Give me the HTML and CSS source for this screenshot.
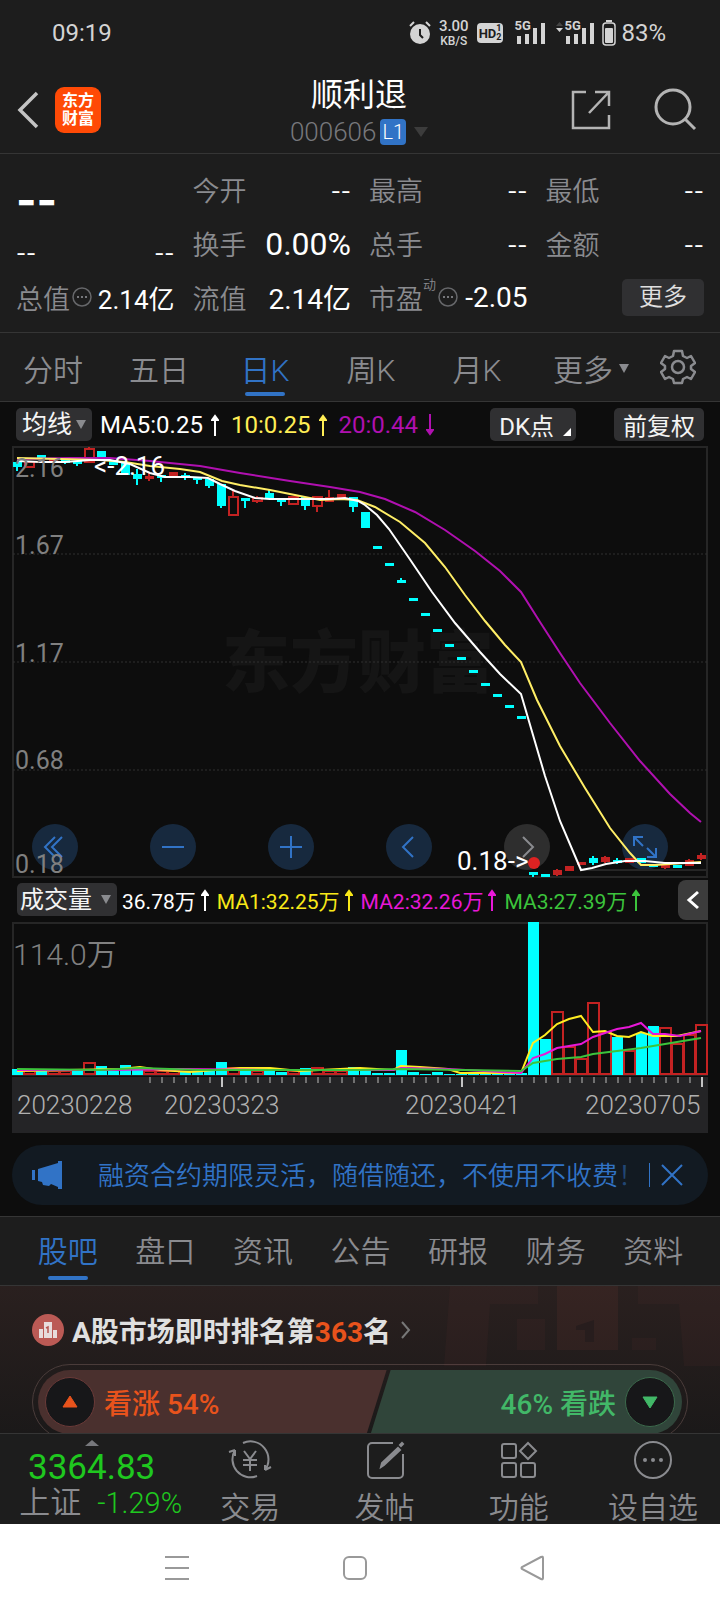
FILE: index.html
```html
<!DOCTYPE html>
<html lang="zh-CN">
<head>
    <meta charset="UTF-8">
    <meta name="viewport" content="width=device-width,initial-scale=1.0">
    <title>顺利退 000606</title>
    <link rel="stylesheet" href="styles.css">
</head>
<body>
<div class="page">
    <div class="status">
        <span class="clock">09:19</span>
        <div class="status-icons">
            <svg width="22" height="24" viewBox="0 0 22 24"><circle cx="11" cy="13" r="10" fill="#d4d4d4"/><path d="M1 5l4-4M21 5l-4-4" stroke="#d4d4d4" stroke-width="2"/><path d="M11 8v6l3 3" stroke="#1d1d1d" stroke-width="2" fill="none"/></svg>
            <span class="speed">3.00<small>KB/S</small></span>
            <span class="hd">HD<small>1<br>2</small></span>
            <span class="signal"><b>5G</b>
                <svg width="31" height="22" viewBox="0 0 31 22" fill="#d4d4d4"><path d="M3 14h4v8H3zM11 12h4v10h-4zM19 6h4v16h-4zM27 1h4v21h-4z"/></svg>
            </span>
            <span class="signal second"><b>5G</b>
                <svg width="38" height="22" viewBox="0 0 38 22" fill="#d4d4d4"><path d="M0 6h7l-3.500 4z"/><path d="M0 4h7L3.500 0z" fill="#444"/><path d="M10 14h4v8h-4zM18 12h4v10h-4zM26 6h4v16h-4zM34 1h4v21h-4z"/></svg>
            </span>
            <svg width="14" height="26" viewBox="0 0 14 26"><rect x="1" y="3" width="12" height="22" rx="3" fill="none" stroke="#d4d4d4" stroke-width="1.500"/><path d="M4 1h6" stroke="#d4d4d4" stroke-width="2"/><rect x="3" y="8" width="8" height="15" rx="1" fill="#d4d4d4"/></svg>
            <span class="battery">83%</span>
        </div>
    </div>

    <header class="header">
        <div class="header-left">
            <button class="icon-btn" aria-label="返回"><svg width="22" height="38" viewBox="0 0 22 38"><path d="M20 2L3 19l17 17" fill="none" stroke="#c4c4c4" stroke-width="3.500"/></svg></button>
            <span class="logo">东方<br>财富</span>
        </div>
        <div class="title">
            <h1>顺利退</h1>
            <p>000606<span class="level">L1</span><i class="down"></i></p>
        </div>
        <div class="header-right">
            <button class="icon-btn" aria-label="分享"><svg width="40" height="40" viewBox="0 0 40 40" fill="none" stroke="#b4b4b4" stroke-width="2.500"><path d="M15 2H2v36h36V25M24 2h14v14M38 2L18 23"/></svg></button>
            <button class="icon-btn" aria-label="搜索"><svg width="43" height="43" viewBox="0 0 43 43" fill="none" stroke="#b4b4b4" stroke-width="3"><circle cx="19" cy="19" r="17"/><path d="M31 31l10 10"/></svg></button>
        </div>
    </header>

    <section class="quote">
        <div class="cell"><strong class="price">--</strong></div>
        <div class="cell"><span>今开</span><b class="none">--</b></div>
        <div class="cell"><span>最高</span><b class="none">--</b></div>
        <div class="cell"><span>最低</span><b class="none">--</b></div>
        <div class="cell low"><b class="none">--</b><b class="none">--</b></div>
        <div class="cell"><span>换手</span><b class="big">0.00%</b></div>
        <div class="cell"><span>总手</span><b class="none">--</b></div>
        <div class="cell"><span>金额</span><b class="none">--</b></div>
        <div class="cell"><span>总值<svg class="info" width="20" height="20" viewBox="0 0 20 20"><circle cx="10" cy="10" r="9" fill="none" stroke="#66676a" stroke-width="1.500"/><path d="M5 9h2v2H5zM9 9h2v2H9zM13 9h2v2h-2z" fill="#77787c"/></svg></span><b class="small">2.14亿</b></div>
        <div class="cell"><span>流值</span><b>2.14亿</b></div>
        <div class="cell"><span>市盈<sup>动</sup><svg class="info" width="20" height="20" viewBox="0 0 20 20"><circle cx="10" cy="10" r="9" fill="none" stroke="#66676a" stroke-width="1.500"/><path d="M5 9h2v2H5zM9 9h2v2H9zM13 9h2v2h-2z" fill="#77787c"/></svg></span><b>-2.05</b></div>
        <div class="cell end"><button class="more">更多</button></div>
    </section>

    <nav class="periods">
        <a href="#">分时</a>
        <a href="#">五日</a>
        <a href="#" class="active">日K</a>
        <a href="#">周K</a>
        <a href="#">月K</a>
        <a href="#" class="other">更多<i class="down"></i></a>
        <button class="icon-btn gear" aria-label="设置"><svg width="36" height="36" viewBox="0 0 36 36" fill="none" stroke="#8a8b8f" stroke-width="2.500" stroke-linejoin="round"><path d="M14 2h8l1 5 4 2 4-2 4 7-4 3v3l4 3-4 7-4-2-4 2-1 4h-8l-1-4-4-2-4 2-4-7 4-3v-3l-4-3 4-7 4 2 4-2z"/><circle cx="18" cy="18" r="6"/></svg></button>
    </nav>

    <section class="chart">
        <div class="legend">
            <label class="picker"><select aria-label="主图指标"><option>均线</option></select><i class="down"></i></label>
            <span class="ma white">MA5:0.25<svg class="arrow" viewBox="0 0 8 22"><path d="M4 22V3M1 6l3-4 3 4z"/></svg></span>
            <span class="ma yellow">10:0.25<svg class="arrow" viewBox="0 0 8 22"><path d="M4 22V3M1 6l3-4 3 4z"/></svg></span>
            <span class="ma purple">20:0.44<svg class="arrow" viewBox="0 0 8 22"><path d="M4 0v19M1 16l3 4 3-4z"/></svg></span>
            <button class="chip dk">DK点<i class="corner"></i></button>
            <button class="chip">前复权</button>
        </div>

        <div class="plot">
            <svg id="price" viewBox="12 445 696 431"></svg>
            <div class="controls">
                <button aria-label="最早"><svg viewBox="0 0 46 46"><path d="M23 13L13 23l10 10M30 13L20 23l10 10"/></svg></button>
                <button aria-label="缩小"><svg viewBox="0 0 46 46"><path d="M12 23h22"/></svg></button>
                <button aria-label="放大"><svg viewBox="0 0 46 46"><path d="M12 23h22M23 12v22"/></svg></button>
                <button aria-label="向左"><svg viewBox="0 0 46 46"><path d="M27 13L17 23l10 10"/></svg></button>
                <button aria-label="向右" class="off"><svg viewBox="0 0 46 46"><path d="M19 13l10 10-10 10"/></svg></button>
                <button aria-label="全屏"><svg viewBox="0 0 46 46"><path d="M12 22v-9h9M12 13l9 9M34 24v9h-9M34 33l-9-9"/></svg></button>
            </div>
        </div>

        <div class="legend volume-legend">
            <label class="picker wide"><select aria-label="副图指标"><option>成交量</option></select><i class="down"></i></label>
            <span class="ma white">36.78万<svg class="arrow" viewBox="0 0 8 22"><path d="M4 22V3M1 6l3-4 3 4z"/></svg></span>
            <span class="ma gold">MA1:32.25万<svg class="arrow" viewBox="0 0 8 22"><path d="M4 22V3M1 6l3-4 3 4z"/></svg></span>
            <span class="ma magenta">MA2:32.26万<svg class="arrow" viewBox="0 0 8 22"><path d="M4 22V3M1 6l3-4 3 4z"/></svg></span>
            <span class="ma green">MA3:27.39万<svg class="arrow" viewBox="0 0 8 22"><path d="M4 22V3M1 6l3-4 3 4z"/></svg></span>
            <button class="collapse" aria-label="展开"><svg width="14" height="20" viewBox="0 0 14 20"><path d="M12 2L3 10l9 8" fill="none" stroke="#fff" stroke-width="3"/></svg></button>
        </div>
        <svg id="volume" viewBox="12 921 696 211"></svg>
    </section>

    <div class="notice">
        <svg width="32" height="28" viewBox="0 0 32 28" fill="#3173c6"><path d="M0 9h3v10H0zM6 8L26 2V0h4v28h-4v-2l-7-3-2 2-6-1-1-3-4-1z"/></svg>
        <a href="#">融资合约期限灵活，随借随还，不使用不收费<span>！</span></a>
        <button class="icon-btn" aria-label="关闭"><svg width="22" height="22" viewBox="0 0 22 22"><path d="M1 1l20 20M21 1L1 21" stroke="#3173c6" stroke-width="2"/></svg></button>
    </div>

    <nav class="sections">
        <a href="#" class="active">股吧</a>
        <a href="#">盘口</a>
        <a href="#">资讯</a>
        <a href="#">公告</a>
        <a href="#">研报</a>
        <a href="#">财务</a>
        <a href="#">资料</a>
    </nav>

    <section class="rank">
        <svg class="rank-bg" width="276" height="80" viewBox="0 0 276 80" fill="#b05048"><path opacity=".05" d="M6 0h88v18H46L42 80H0zM194 0h82v80h-36l-5-62h-41z"/><path opacity=".09" d="M113 0h61v64h-61z"/><path opacity=".05" d="M73 33h28v31H73zM188 52h24v12h-24z"/><path fill="#271d1d" d="M132 40l18-6v22h-9V44h-9z"/></svg>
        <a href="#" class="rank-title">
            <svg width="32" height="32" viewBox="0 0 32 32"><circle cx="16" cy="16" r="16" fill="#bb5a55"/><path d="M7 15h4v9H7zM12 8h8v16h-8zM21 16h4v8h-4z" fill="#e8dcdc"/><path d="M14 14l2-1v6" fill="none" stroke="#b65550" stroke-width="1.500"/></svg>
            <span>A股市场即时排名第<em>363</em>名</span>
            <svg width="10" height="18" viewBox="0 0 10 18"><path d="M1 1l7 8-7 8" fill="none" stroke="#777" stroke-width="2"/></svg>
        </a>
        <div class="vote">
            <button class="up"><i><svg width="16" height="14" viewBox="0 0 16 14"><path d="M8 1l7 11H1z" fill="#e8531c" stroke="#e8531c" stroke-linejoin="round"/></svg></i>看涨 54%</button>
            <button class="fall">46% 看跌<i><svg width="16" height="14" viewBox="0 0 16 14"><path d="M8 13l7-11H1z" fill="#42b868" stroke="#42b868" stroke-linejoin="round"/></svg></i></button>
        </div>
    </section>

    <footer class="bottom">
        <a href="#" class="index">
            <svg width="14" height="6" viewBox="0 0 14 6"><path d="M0 6h14L7 0z" fill="#77787c"/></svg>
            <strong>3364.83</strong>
            <span>上证<b>-1.29%</b></span>
        </a>
        <a href="#"><svg width="44" height="40" viewBox="0 0 44 40" fill="none" stroke="#8a8b8f" stroke-width="2"><path d="M15 3a18 18 0 0 1 22 27M37 30v-5M37 30l6-3M29 36A18 18 0 0 1 7 10M7 10v6M7 10l-6 2"/><path d="M16 11l6 8 6-8M22 19v12M15 20h14M15 25h14"/></svg>交易</a>
        <a href="#"><svg width="40" height="40" viewBox="0 0 40 40" fill="none" stroke="#8a8b8f" stroke-width="2"><path d="M28 3H7a4 4 0 0 0-4 4v27a4 4 0 0 0 4 4h27a4 4 0 0 0 4-4V14"/><path d="M16 27l1-4L33 8l2 2-16 15zM35 5l2-2 1 1-2 2z" fill="#8a8b8f"/></svg>发帖</a>
        <a href="#"><svg width="40" height="40" viewBox="0 0 40 40" fill="none" stroke="#8a8b8f" stroke-width="2"><rect x="3" y="4" width="14" height="14" rx="2"/><rect x="3" y="23" width="14" height="14" rx="2"/><rect x="22" y="23" width="14" height="14" rx="2"/><path d="M29 3l8 8-8 8-8-8z"/></svg>功能</a>
        <a href="#"><svg width="40" height="40" viewBox="0 0 40 40"><circle cx="20" cy="20" r="18" fill="none" stroke="#8a8b8f" stroke-width="2"/><g fill="#8a8b8f"><circle cx="12" cy="20" r="2"/><circle cx="20" cy="20" r="2"/><circle cx="28" cy="20" r="2"/></g></svg>设自选</a>
    </footer>

    <div class="system">
        <button class="icon-btn" aria-label="菜单"><svg width="24" height="26" viewBox="0 0 24 26"><path d="M0 2h24M0 13h24M0 24h24" stroke="#999" stroke-width="2"/></svg></button>
        <button class="icon-btn" aria-label="主页"><svg width="24" height="26" viewBox="0 0 24 26"><rect x="1" y="2" width="22" height="22" rx="5" fill="none" stroke="#999" stroke-width="2"/></svg></button>
        <button class="icon-btn" aria-label="后退"><svg width="24" height="26" viewBox="0 0 24 26"><path d="M23 3v20q0 2-2 1L2 14q-1-1 0-2L21 2q2-1 2 1z" fill="none" stroke="#999" stroke-width="2"/></svg></button>
    </div>
</div>
<script>
const CYAN = "#00ffff";
const RED = "#c32222";
const STEP = 12;
const x = i => 17 + STEP * i;

// kind (c = down, r = up, h = up hollow), body top, body bottom, wick top, wick bottom
const candles = [
    ["c",461,466,461,470],["h",461,466,461,467],["c",454,458,454,458],["r",457,459,457,459],["c",459,462,459,463],
    ["c",460,463,460,465],["h",448,461,446,461],["c",450,456,450,456],["c",459,464,459,464],["c",462,474,462,474],
    ["c",473,478,468,484],["r",475,477,472,480],["c",474,476,474,481],["r",471,475,471,475],["c",474,476,472,479],
    ["c",476,478,476,483],["c",478,485,478,487],["c",483,505,483,507],["h",496,514,489,514],["c",497,499,497,507],
    ["h",497,500,495,502],["c",492,498,489,498],["c",498,500,498,505],["h",496,503,496,503],["c",496,505,496,509],
    ["h",496,505,496,511],["r",496,501,489,501],["r",493,497,493,497],["c",496,506,496,511],["c",511,527,511,527],
    ["c",545,547,545,547],["c",562,564,562,564],["c",579,582,577,582],["c",597,599,597,599],["c",612,614,612,614],
    ["c",628,630,628,630],["c",643,645,643,645],["c",656,658,656,658],["c",669,671,669,671],["c",682,684,682,684],
    ["c",693,695,693,695],["c",704,706,704,706],["c",715,717,715,717],["c",871,873,871,876],["c",873,875,873,875],
    ["r",869,874,868,875],["r",865,870,865,870],["r",861,863,861,863],["c",857,862,855,864],["r",856,861,855,862],
    ["c",859,862,857,863],["r",857,862,857,862],["c",857,862,857,862],["c",863,866,863,866],["r",863,867,863,868],
    ["c",864,865,864,865],["r",859,865,858,865],["r",854,858,852,859]
];

const maLines = {
    "#b010b0": "17,458 70,457 110,457 150,460 200,465 240,472 290,480 330,486 360,491 385,498 415,511 445,529 475,550 500,570 521,591 540,621 560,652 580,682 610,722 640,760 670,793 690,812 701,821",
    "#ffee66": "17,457 60,458 100,459 125,461 150,465 180,468 200,471 222,480 240,484 270,489 300,495 320,499 340,498 357,499 375,506 400,521 425,542 445,566 465,594 485,620 505,644 521,661 537,699 560,745 585,787 610,827 630,852 641,864 655,864 670,863 701,861",
    "#ffffff": "17,460 40,461 65,461 90,459 110,459 130,463 150,472 165,476 190,476 208,477 220,483 235,490 255,497 270,498 300,498 330,498 345,497 358,500 365,504 377,514 389,528 409,557 432,591 455,622 480,651 500,673 521,693 545,775 560,820 581,869 592,867 606,863 625,860 645,860 665,862 701,862"
};

// bar tops, baseline is 1073
const volumes = [
    "c1068","r1070","c1070","r1070","r1070","c1070","r1062","c1065","c1070","c1064","c1068","r1070","r1070","r1070","c1071",
    "c1071","c1070","c1061","r1067","c1069","r1070","c1069","c1071","r1070","c1067","r1067","r1070","r1070","c1066","c1067",
    "c1072","c1072","c1049","c1071","c1073","c1071","c1073","c1073","c1073","c1073","c1073","c1073","c1072","c921","c1038",
    "r1011","r1046","r1058","r1002","r1031","c1036","r1050","c1032","c1025","r1027","r1043","r1034","r1024"
];

const volumeLines = {
    "#ffee22": "17,1070 120,1068 140,1066 160,1069 190,1071 240,1067 270,1067 300,1070 360,1067 393,1069 401,1065 420,1066 448,1068 460,1072 521,1072 533,1042 545,1034 557,1023 569,1018 581,1015 593,1031 605,1030 617,1035 629,1036 641,1031 653,1035 677,1035 701,1030",
    "#e818d8": "17,1069 110,1069 180,1068 270,1069 393,1069 401,1067 448,1068 521,1072 533,1057 545,1053 557,1047 581,1043 593,1036 605,1032 617,1028 629,1026 641,1022 653,1033 665,1033 680,1035 701,1030",
    "#3cc43c": "17,1068 100,1069 140,1067 200,1069 360,1069 401,1068 521,1070 533,1062 545,1060 557,1058 581,1056 593,1053 617,1050 641,1047 665,1043 701,1037"
};

function lines(set) {
    return Object.entries(set).map(([color, points]) =>
        `<polyline points="${points}" fill="none" stroke="${color}" stroke-width="2"/>`).join("");
}

function drawPrice() {
    let out = `<text class="watermark" x="222" y="686">东方财富</text>`;
    out += `<path class="frame" d="M13 876V446H707V876z"/>`;
    [553, 661, 769].forEach(y => out += `<path class="grid" d="M13 ${y}H707"/>`);
    out += `<path class="frame" d="M580 869H707"/>`;
    candles.forEach(([kind, top, bottom, high, low], i) => {
        const color = kind === "c" ? CYAN : RED;
        if (kind === "h") {
            out += `<path d="M${x(i)} ${high}V${top}M${x(i)} ${bottom}V${low}" stroke="${color}" stroke-width="2"/>`;
            out += `<rect x="${x(i) - 4}" y="${top}" width="9" height="${bottom - top}" fill="none" stroke="${color}" stroke-width="2"/>`;
        } else {
            out += `<path d="M${x(i)} ${high}V${low}" stroke="${color}" stroke-width="2"/>`;
            out += `<rect x="${x(i) - 4}" y="${top}" width="9" height="${Math.max(bottom - top, 3)}" fill="${color}"/>`;
        }
    });
    out += lines(maLines);
    out += `<circle cx="534" cy="862" r="6" fill="#dd2222"/>`;
    [["2.16", 476], ["1.67", 553], ["1.17", 661], ["0.68", 768], ["0.18", 872]].forEach(([label, y]) =>
        out += `<text class="scale" x="15" y="${y}">${label}</text>`);
    out += `<text class="mark" x="94" y="474">&lt;-2.16</text><text class="mark" x="457" y="869">0.18-&gt;</text>`;
    document.getElementById("price").innerHTML = out;
}

function drawVolume() {
    let out = `<path class="frame" d="M13 1074V922H707V1074z"/>`;
    volumes.forEach((v, i) => {
        const top = Number(v.slice(1));
        if (v[0] === "c") {
            out += `<rect x="${x(i) - 5}" y="${top}" width="11" height="${1074 - top}" fill="${CYAN}"/>`;
        } else {
            out += `<rect x="${x(i) - 5}" y="${top}" width="11" height="${1073 - top}" fill="none" stroke="${RED}" stroke-width="2"/>`;
        }
    });
    out += lines(volumeLines);
    out += `<rect x="12" y="1076" width="696" height="56" fill="#242426"/>`;
    for (let t = 150; t < 708; t += STEP) {
        const major = t === 222 || t === 462 || t === 702;
        out += `<path d="M${t} 1076v${major ? 10 : 6}" stroke="${major ? "#c4c4c4" : "#707070"}" stroke-width="2"/>`;
    }
    out += `<text class="scale large" x="13" y="964">114.0万</text>`;
    [["20230228", 17], ["20230323", 164], ["20230421", 405], ["20230705", 585]].forEach(([date, left]) =>
        out += `<text class="date" x="${left}" y="1113">${date}</text>`);
    document.getElementById("volume").innerHTML = out;
}

drawPrice();
drawVolume();
</script>
</body>
</html>
```
FILE: styles.css
```css
* {
    box-sizing: border-box;
}

body {
    margin: 0;
    background: #0d0d0d;
    color: #8a8b8f;
    font-family: Roboto, "Noto Sans CJK SC", sans-serif;
    font-weight: 350;
}

a {
    color: inherit;
    text-decoration: none;
}

button, select {
    border: none;
    padding: 0;
    background: none;
    color: inherit;
    font: inherit;
    cursor: pointer;
}

svg {
    display: block;
    flex-shrink: 0;
}

.page {
    display: flex;
    flex-direction: column;
    height: 100vh;
    min-height: 1500px;
}

.icon-btn {
    display: flex;
    align-items: center;
    justify-content: center;
}

.down {
    border-left: 5px solid transparent;
    border-right: 5px solid transparent;
    border-top: 9px solid #8a8b8f;
}

/* status bar */
.status {
    display: flex;
    justify-content: space-between;
    align-items: center;
    height: 66px;
    padding: 0 54px 0 52px;
    background: #1d1d1d;
    color: #d4d4d4;
    font-size: 24px;
    font-weight: 400;
}

.status-icons {
    display: flex;
    align-items: center;
    gap: 8px;
}

.speed {
    display: flex;
    flex-direction: column;
    align-items: center;
    font-size: 15px;
    line-height: 16px;
    font-weight: 500;
}

.speed small {
    font-size: 12px;
    line-height: 14px;
}

.hd {
    display: flex;
    align-items: center;
    height: 20px;
    padding: 0 2px;
    border-radius: 4px;
    background: #d4d4d4;
    color: #1d1d1d;
    font-size: 13px;
    font-weight: 700;
}

.hd small {
    font-size: 9px;
    line-height: 9px;
}

.signal {
    position: relative;
    margin-left: 3px;
}

.signal b {
    position: absolute;
    top: -3px;
    left: 0;
    font-size: 13px;
    line-height: 14px;
}

.signal.second b {
    left: 8px;
}

.battery {
    margin-left: -3px;
}

/* header */
.header {
    display: grid;
    grid-template-columns: 1fr auto 1fr;
    align-items: center;
    height: 88px;
    padding: 0 23px 0 17px;
    background: #1d1d1d;
    border-bottom: 1px solid #353535;
}

.header-left {
    display: flex;
    align-items: center;
    gap: 16px;
}

.header-right {
    display: flex;
    align-items: center;
    justify-content: flex-end;
    gap: 43px;
}

.logo {
    width: 46px;
    height: 46px;
    padding-top: 5px;
    border-radius: 9px;
    background: #ff4a06;
    color: #fff;
    font-size: 16px;
    line-height: 18px;
    font-weight: 700;
    text-align: center;
}

.title {
    padding: 4px 0 0 4px;
}

.title h1 {
    margin: 0;
    color: #fff;
    font-size: 32px;
    line-height: 40px;
    font-weight: 400;
    text-align: center;
}

.title p {
    display: flex;
    align-items: center;
    justify-content: center;
    margin: 0;
    color: #77787c;
    font-size: 26px;
    line-height: 34px;
}

.level {
    margin-left: 4px;
    padding: 0 2px;
    border-radius: 4px;
    background: #3173c6;
    color: #fff;
    font-size: 20px;
    line-height: 26px;
}

.title .down {
    margin-left: 8px;
    border-left-width: 7px;
    border-right-width: 7px;
    border-top: 10px solid #3c3c3c;
}

/* quote */
.quote {
    display: grid;
    grid-template-columns: repeat(4, 1fr);
    grid-auto-rows: 54px;
    column-gap: 18px;
    padding: 8px 16px 8px 16px;
    background: #1d1d1d;
    border-bottom: 1px solid #353535;
}

.cell {
    display: flex;
    align-items: center;
    justify-content: space-between;
    font-size: 27px;
    white-space: nowrap;
}

.cell span {
    display: flex;
    align-items: center;
}

.cell b {
    color: #fff;
    font-size: 28px;
    font-weight: 400;
}

.cell b.big {
    padding-top: 2px;
    font-size: 32px;
}

.cell b.small {
    font-size: 26px;
}

.cell b.none {
    padding-top: 4px;
    font-family: Inter, sans-serif;
    font-size: 22px;
}

.cell.low {
    padding-top: 16px;
}

.cell.end {
    justify-content: flex-end;
}

.cell sup {
    align-self: flex-start;
    font-size: 13px;
    line-height: 13px;
}

.cell .info {
    margin-left: 2px;
}

.price {
    padding-top: 22px;
    color: #fff;
    font-family: Inter, sans-serif;
    font-size: 44px;
    line-height: 36px;
    font-weight: 700;
}

.more {
    width: 82px;
    height: 37px;
    border-radius: 5px;
    background: #303032;
    color: #e0e0e0;
    font-size: 24px;
    line-height: 37px;
}

/* tabs */
.periods {
    display: grid;
    grid-template-columns: repeat(6, 106fr) 84fr;
    height: 69px;
    background: #1d1d1d;
    border-bottom: 1px solid #353535;
    font-size: 30px;
}

.periods a {
    display: flex;
    align-items: center;
    justify-content: center;
    padding-top: 2px;
}

.periods a.other {
    padding-left: 16px;
}

.periods .down {
    margin-left: 6px;
}

.periods .active, .sections .active {
    position: relative;
    color: #3173c6;
}

.active::after {
    content: "";
    position: absolute;
    left: 50%;
    bottom: 5px;
    width: 40px;
    height: 4px;
    margin-left: -20px;
    border-radius: 2px;
    background: #3173c6;
}

/* chart */
.chart {
    padding: 0 12px;
}

.legend {
    display: flex;
    align-items: center;
    height: 44px;
    padding: 0 4px;
    font-size: 24px;
    font-weight: 400;
}

.picker, .chip {
    display: flex;
    align-items: center;
    height: 33px;
    border-radius: 5px;
    background: #303032;
    color: #f4f4f4;
}

.picker {
    position: relative;
    width: 76px;
    margin-right: 8px;
}

.picker select {
    width: 100%;
    height: 33px;
    padding-left: 6px;
    appearance: none;
    font-size: 25px;
}

.picker .down {
    position: absolute;
    top: 12px;
    right: 6px;
    pointer-events: none;
}

.picker.wide {
    width: 100px;
    margin-right: 5px;
}

.picker.wide select {
    padding-left: 3px;
    font-size: 24px;
}

.ma {
    display: flex;
    align-items: center;
    margin-right: 12px;
    padding-top: 2px;
    white-space: nowrap;
}

.arrow {
    width: 8px;
    height: 22px;
    margin-left: 8px;
    fill: currentColor;
    stroke: currentColor;
    stroke-width: 2;
}

.white { color: #fff; }
.yellow { color: #ffee55; }
.purple { color: #b010b0; }
.gold { color: #f8e818; }
.magenta { color: #e818d8; }
.green { color: #3cc43c; }

.chip {
    padding: 0 9px;
    font-size: 24px;
}

.chip.dk {
    margin-left: auto;
    margin-right: 38px;
}

.corner {
    align-self: flex-end;
    margin: 0 -4px 5px 9px;
    border-left: 8px solid transparent;
    border-bottom: 8px solid #fff;
}

.plot {
    position: relative;
}

.chart > svg, .plot > svg {
    width: 100%;
    height: auto;
    overflow: visible;
}

/* labels stay readable above the round buttons */
.plot > svg {
    position: relative;
    z-index: 1;
    pointer-events: none;
}

.frame {
    fill: none;
    stroke: #262626;
    stroke-width: 2;
}

.grid {
    stroke: #303030;
    stroke-dasharray: 2 2;
}

.watermark {
    fill: #151515;
    font-size: 68px;
    font-weight: 900;
}

.scale {
    fill: #808080;
    font-size: 25px;
    font-weight: 400;
}

.scale.large {
    font-size: 30px;
    font-weight: 350;
}

.date {
    fill: #b0b0b0;
    font-size: 26px;
}

.mark {
    fill: #fff;
    font-size: 26px;
    font-weight: 400;
}

.controls {
    position: absolute;
    left: 20px;
    right: 40px;
    bottom: 7px;
    display: flex;
    justify-content: space-between;
}

.controls button {
    width: 46px;
    height: 46px;
    border-radius: 50%;
    background: rgba(34, 70, 112, 0.5);
}

.controls .off {
    background: rgba(80, 80, 80, 0.5);
}

.controls path {
    fill: none;
    stroke: #3173c6;
    stroke-width: 2;
}

.controls .off path {
    stroke: #8a8b8f;
}

.volume-legend {
    height: 45px;
    padding: 0 0 0 5px;
    font-size: 21px;
}

.volume-legend .ma {
    margin-right: 8px;
    padding-top: 0;
}

.volume-legend .arrow {
    margin-left: 5px;
}

.collapse {
    display: flex;
    align-items: center;
    justify-content: center;
    width: 30px;
    height: 40px;
    margin-left: auto;
    border-radius: 8px 0 0 8px;
    background: #3c3c3c;
}

/* notice */
.notice {
    display: flex;
    align-items: center;
    height: 60px;
    margin: 12px 12px 11px;
    padding: 0 25px 0 20px;
    border-radius: 30px;
    background: #121a22;
    color: #3173c6;
    font-size: 26px;
}

.notice a {
    flex: 1;
    margin-left: 34px;
    padding-bottom: 4px;
    overflow: hidden;
    white-space: nowrap;
}

.notice a span {
    opacity: 0.5;
}

.notice button {
    height: 24px;
    padding-left: 11px;
    border-left: 1px solid #3173c6;
}

/* sections */
.sections {
    display: flex;
    height: 70px;
    padding: 0 18px 0 19px;
    background: #1d1d1d;
    border-top: 1px solid #353535;
    border-bottom: 1px solid #353535;
    font-size: 30px;
    line-height: 70px;
}

.sections a {
    flex: 1;
    text-align: center;
}

/* rank */
.rank {
    position: relative;
    flex: 1;
    min-height: 0;
    overflow: hidden;
    padding: 25px 32px 0;
    background: linear-gradient(#2a201f, #1b1919);
}

.rank-bg {
    position: absolute;
    top: 0;
    right: 0;
}

.rank-title {
    display: flex;
    align-items: center;
    gap: 8px;
    height: 38px;
    color: #e0e0e0;
    font-size: 28px;
    font-weight: 700;
}

.rank-title em {
    color: #e8531c;
    font-style: normal;
}

.rank-title svg:last-child {
    margin-left: 2px;
}

.vote {
    display: flex;
    height: 76px;
    margin-top: 15px;
    padding: 5px;
    border: 1px solid #4a3c3a;
    border-radius: 38px;
}

.vote button {
    display: flex;
    align-items: center;
    gap: 9px;
    height: 64px;
    padding: 0 7px;
    font-size: 28px;
    font-weight: 500;
}

.vote .up {
    flex: 54;
    border-radius: 32px 0 0 32px;
    background: #4a302e;
    color: #e8531c;
    clip-path: polygon(0 0, 100% 0, calc(100% - 20px) 100%, 0 100%);
}

.vote .fall {
    flex: 48;
    justify-content: flex-end;
    margin-left: -16px;
    border-radius: 0 32px 32px 0;
    background: #30453a;
    color: #42b868;
    clip-path: polygon(20px 0, 100% 0, 100% 100%, 0 100%);
}

.vote i {
    display: flex;
    align-items: center;
    justify-content: center;
    width: 50px;
    height: 50px;
    border: 1px solid #6a3a38;
    border-radius: 50%;
    background: #171719;
}

.vote .fall i {
    border-color: #3c6a4c;
}

/* bottom bar */
.bottom {
    display: flex;
    height: 91px;
    background: #1d1d1d;
    border-top: 1px solid #353535;
    font-size: 30px;
}

.bottom a {
    display: flex;
    flex: 134;
    flex-direction: column;
    align-items: center;
    padding-top: 6px;
    line-height: 56px;
}

.bottom .index {
    flex: 183;
}

.index strong {
    color: #1fc81f;
    font-size: 35px;
    line-height: 44px;
    font-weight: 400;
}

.index span {
    display: flex;
    gap: 16px;
    padding-left: 18px;
    font-size: 31px;
    line-height: 26px;
}

.index b {
    color: #1fc81f;
    font-size: 29px;
    font-weight: 350;
}

/* system bar */
.system {
    display: flex;
    height: 88px;
    padding: 0 99px 0 88px;
    background: #fff;
}

.system button {
    flex: 1;
}
```
